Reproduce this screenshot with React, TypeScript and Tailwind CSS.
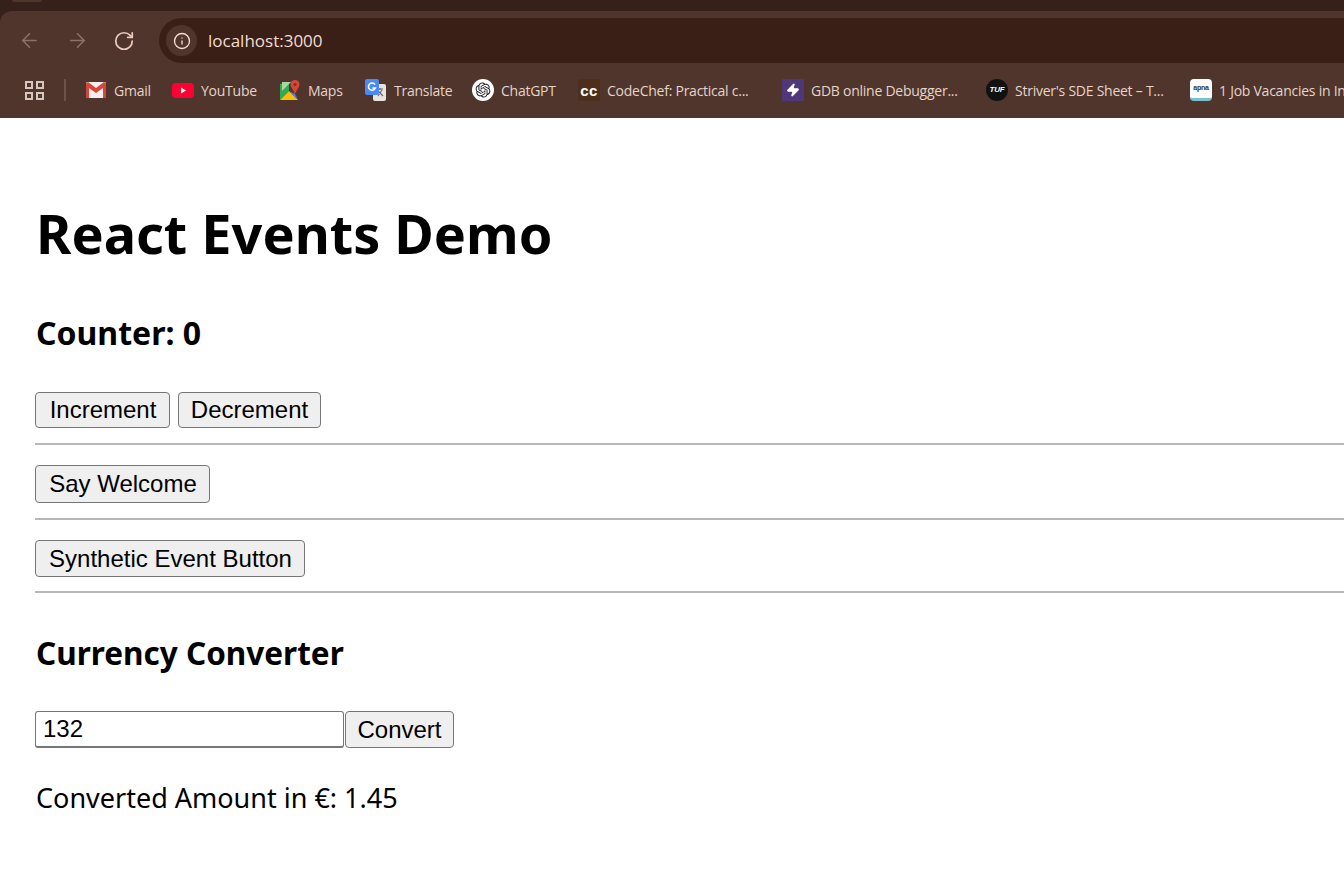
import { ArrowLeft, ArrowRight, Info, RotateCw, Zap } from "lucide-react";
import type { ReactNode } from "react";
import { RiOpenaiFill } from "react-icons/ri";

function GmailIcon() {
  return (
    <svg viewBox="0 0 20 16" className="mr-[1px] h-[16px] w-[20px]">
      <rect x="0" y="0" width="20" height="16" rx="1.5" fill="#f4efec" />
      <path d="M0 1.5V16h3V6l7 5 7-5v10h3V1.5L18 0l-8 6-8-6z" fill="#d9453a" />
    </svg>
  );
}

function YouTubeIcon() {
  return (
    <svg viewBox="0 0 22 15" className="h-[15px] w-[22px]">
      <rect width="22" height="15" rx="4" fill="#ff0033" />
      <path d="M9 4.5v6l5-3z" fill="#fff" />
    </svg>
  );
}

function MapsIcon() {
  return (
    <svg viewBox="0 0 20 20" className="mr-[1px] h-[20px] w-[20px]">
      <path d="M0 4l9-2v9l-9 9z" fill="#34a853" />
      <path d="M0 20l9-9 9 9z" fill="#fbbc04" />
      <path d="M9 11l6 3 3 6z" fill="#4285f4" />
      <path d="M2 2h9L2 11z" fill="#a8d7a0" />
      <circle cx="15" cy="4.5" r="4.5" fill="#d6473a" />
      <path d="M11.5 7l3.5 7 3.5-7z" fill="#d6473a" />
      <circle cx="15" cy="4.5" r="1.6" fill="#8f2a22" />
    </svg>
  );
}

function TranslateIcon() {
  return (
    <svg viewBox="0 0 21 22" className="mr-[1px] h-[22px] w-[21px]">
      <rect x="8" y="5" width="13" height="17" rx="2" fill="#e6e3e1" />
      <path d="M12 10h6M15 9v2M13 17l4-6M13 12l5 5" stroke="#6b6b6b" strokeWidth="1.2" fill="none" />
      <rect x="0" y="0" width="14" height="16" rx="2" fill="#4a8af4" />
      <path d="M10 5.6A3.6 3.6 0 1 0 10.4 9H7.4" stroke="#fff" strokeWidth="1.5" fill="none" />
    </svg>
  );
}

interface Bookmark {
  label: string;
  icon: ReactNode;
  width: string;
}

const bookmarks: Bookmark[] = [
  { label: "Gmail", icon: <GmailIcon />, width: "w-[86px]" },
  { label: "YouTube", icon: <YouTubeIcon />, width: "w-[108px]" },
  { label: "Maps", icon: <MapsIcon />, width: "w-[85px]" },
  { label: "Translate", icon: <TranslateIcon />, width: "w-[107px]" },
  {
    label: "ChatGPT",
    icon: (
      <span className="flex size-[22px] items-center justify-center rounded-full bg-white">
        <RiOpenaiFill className="size-[18px] text-[#222]" />
      </span>
    ),
    width: "w-[106px]",
  },
  {
    label: "CodeChef: Practical c...",
    icon: (
      <span className="flex size-[22px] items-center justify-center bg-[#4d301c] font-['Liberation_Sans',sans-serif] text-[15px] font-bold leading-none tracking-[0.5px] text-white">
        cc
      </span>
    ),
    width: "w-[204px]",
  },
  {
    label: "GDB online Debugger...",
    icon: (
      <span className="flex size-[22px] items-center justify-center bg-[#503779]">
        <Zap className="size-[14px] fill-white text-white" />
      </span>
    ),
    width: "w-[204px]",
  },
  {
    label: "Striver's SDE Sheet – T...",
    icon: (
      <span className="flex size-[22px] items-center justify-center rounded-full bg-[#111] font-['Liberation_Sans',sans-serif] text-[8px] font-bold italic text-white">
        TUF
      </span>
    ),
    width: "w-[204px]",
  },
  {
    label: "1 Job Vacancies in India",
    icon: (
      <span className="flex size-[22px] items-center justify-center rounded-[4px] border-b-[3px] border-[#7cc0c8] bg-white font-['Liberation_Sans',sans-serif] text-[7px] font-bold text-[#333]">
        apna
      </span>
    ),
    width: "w-[204px]",
  },
];

const buttonClass =
  "h-[37px] rounded-[4px] border-[1.5px] border-[#767676] bg-[#efefef] font-['Liberation_Sans',sans-serif] text-[24px] leading-none text-black";

function BrowserChrome() {
  return (
    <div className="bg-[#35201a] font-['Open_Sans',sans-serif]">
      <div className="h-[11px] pl-[12px]">
        <div className="h-[2px] w-[30px] rounded-b-md bg-[#4f352b]" />
      </div>
      <div className="rounded-tl-[12px] bg-[#4f352b]">
        <div className="flex h-[59px] items-center">
          <ArrowLeft className="ml-[18px] size-[23px] text-[#8b736a]" strokeWidth={1.6} />
          <ArrowRight className="ml-[25px] size-[23px] text-[#8b736a]" strokeWidth={1.6} />
          <RotateCw className="ml-[24px] size-[22px] text-[#ecc9bc]" strokeWidth={1.9} />
          <div className="ml-[24px] flex h-[45px] flex-1 items-center rounded-l-full bg-[#3a1f17] pl-[7px]">
            <span className="flex size-[31px] items-center justify-center rounded-full bg-[#4f352b]">
              <Info className="size-[18px] text-[#f3dcd2]" strokeWidth={1.8} />
            </span>
            <span className="ml-[11px] text-[17px] text-[#f3dcd2]">localhost:3000</span>
          </div>
        </div>
        <div className="flex h-[48px] items-center overflow-hidden whitespace-nowrap pb-[8px] text-[14px] tracking-[-0.25px] text-[#e6d3ca]">
          <div className="ml-[25px] grid size-[19px] shrink-0 grid-cols-2 gap-[3px]">
            <span className="border-2 border-[#d6c6bf]" />
            <span className="border-2 border-[#d6c6bf]" />
            <span className="border-2 border-[#d6c6bf]" />
            <span className="border-2 border-[#d6c6bf]" />
          </div>
          <div className="ml-[20px] mr-[20px] h-[22px] w-[2px] shrink-0 bg-[#6d5248]" />
          {bookmarks.map((b) => (
            <div key={b.label} className={`flex shrink-0 items-center gap-[7px] ${b.width}`}>
              {b.icon}
              <span>{b.label}</span>
            </div>
          ))}
        </div>
      </div>
    </div>
  );
}

export default function App() {
  return (
    <div className="h-[879px] overflow-hidden bg-white text-black">
      <BrowserChrome />
      <main className="pl-[35px] font-['Noto_Sans',sans-serif]">
        <h1 className="ml-[1px] mt-[80px] text-[54px] font-bold leading-[70px]">React Events Demo</h1>
        <h2 className="ml-[1px] mt-[45px] text-[32px] font-bold leading-[40px]">Counter: 0</h2>
        <div className="mt-[39px] flex gap-[8px]">
          <button className={`${buttonClass} !h-[36px] w-[135px] pl-[1px]`}>Increment</button>
          <button className={`${buttonClass} !h-[36px] w-[143px]`}>Decrement</button>
        </div>
        <hr className="mt-[15px] border-t-2 border-[#b8b8b8]" />
        <button className={`${buttonClass} mt-[20px] block !h-[38px] w-[175px] pl-[1px]`}>Say Welcome</button>
        <hr className="mt-[15px] border-t-2 border-[#b8b8b8]" />
        <button className={`${buttonClass} mt-[20px] block w-[270px] pl-[1px]`}>Synthetic Event Button</button>
        <hr className="mt-[14px] border-t-2 border-[#b8b8b8]" />
        <h2 className="ml-[1px] mt-[40px] text-[31.5px] font-bold leading-[40px]">Currency Converter</h2>
        <div className="mt-[38px] flex items-center gap-[1px]">
          <input
            readOnly
            value="132"
            className="h-[37px] w-[309px] rounded-[3px] border-[1.5px] border-b-2 border-[#767676] bg-white px-[7px] font-['Liberation_Sans',sans-serif] text-[24px] text-black"
          />
          <button className={`${buttonClass} w-[109px]`}>Convert</button>
        </div>
        <p className="ml-[1px] mt-[30px] text-[27px] leading-[40px]">Converted Amount in €: 1.45</p>
      </main>
    </div>
  );
}
